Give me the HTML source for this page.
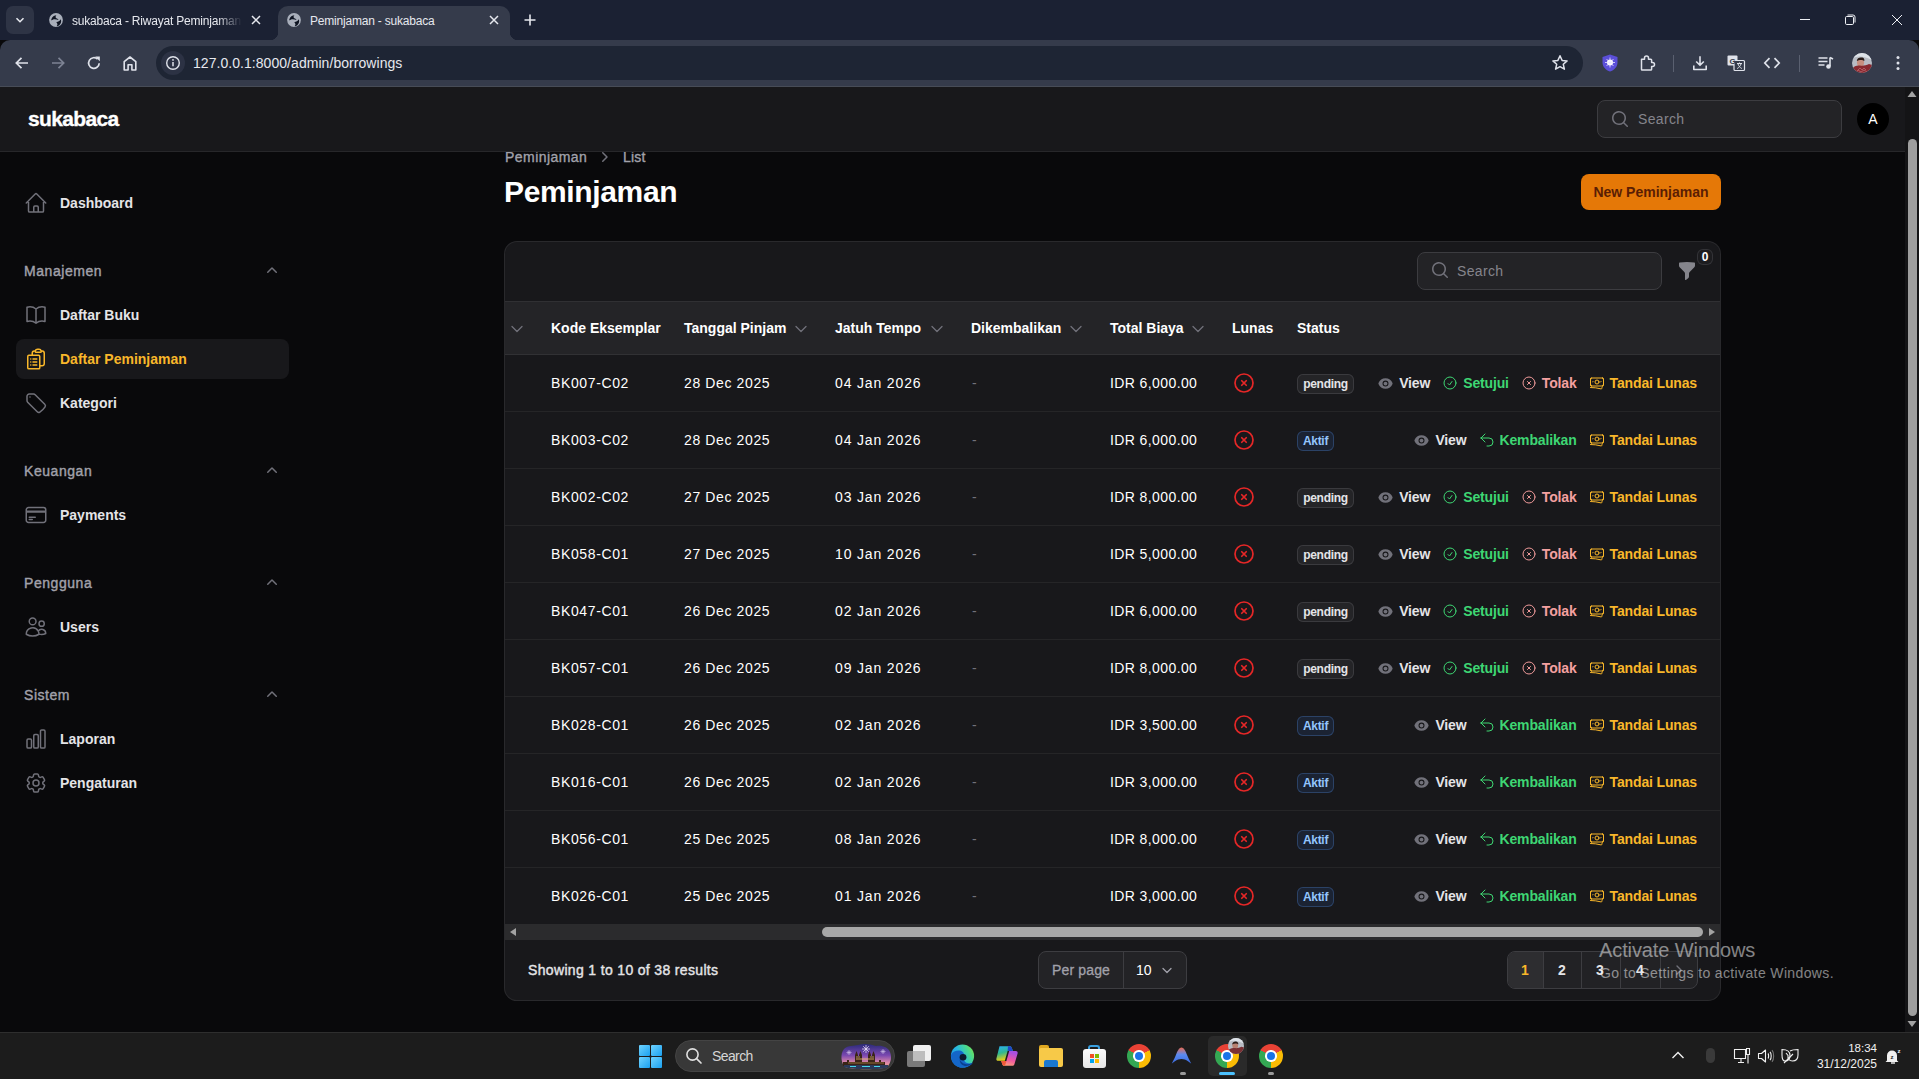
<!DOCTYPE html>
<html><head><meta charset="utf-8">
<style>
*{box-sizing:border-box;margin:0;padding:0}
html,body{width:1919px;height:1079px;overflow:hidden;background:#09090b;font-family:"Liberation Sans",sans-serif;}
.a{position:absolute}
svg{display:block}
/* chrome */
#tabstrip{left:0;top:0;width:1919px;height:40px;background:#1b2133}
#toolbar{left:0;top:40px;width:1919px;height:47px;background:#353b4b;border-radius:10px 10px 0 0}
.tabtxt{font-size:12px;color:#e6e8ee;white-space:nowrap;line-height:16px;letter-spacing:-.2px}
#omni{left:156px;top:46px;width:1427px;height:34px;border-radius:17px;background:#1e2534}
/* app */
#topbar{left:0;top:87px;width:1905px;height:65px;background:#18181b;border-bottom:1px solid #27272a}
.nav{left:16px;width:273px;height:40px;border-radius:8px}
.navtxt{position:absolute;left:44px;top:0;line-height:40px;font-size:14px;font-weight:700;color:#e4e4e7;white-space:nowrap}
.navic{position:absolute;left:8px;top:8px;width:24px;height:24px}
.grp{left:24px;font-size:14px;font-weight:400;letter-spacing:.55px;-webkit-text-stroke:.4px #a1a1aa;color:#a1a1aa;line-height:20px;white-space:nowrap}
.grpch{left:262px;width:20px;height:20px}
.th{font-size:14px;font-weight:700;color:#fff;line-height:20px;white-space:nowrap}
.td{font-size:14px;color:#fff;line-height:20px;white-space:nowrap;letter-spacing:.62px}
.badge{height:20px;border-radius:6px;background:#242427;box-shadow:inset 0 0 0 1px #3a3a3e;color:#e4e4e7;font-size:12px;font-weight:700;line-height:20px;text-align:center;letter-spacing:-.3px}
.badge.info{background:#1b2333;box-shadow:inset 0 0 0 1px #2b4266;color:#93c5fd}
.acts{display:flex;gap:12px;height:20px;align-items:center;white-space:nowrap}
.act{display:flex;align-items:center;gap:5px;font-size:14px;font-weight:700;line-height:20px;letter-spacing:-.15px}
</style></head>
<body>
<!-- ============ CHROME TAB STRIP ============ -->
<div id="tabstrip" class="a"></div>
<div class="a" style="left:6px;top:6px;width:28px;height:28px;border-radius:7px;background:#2e3445"></div>
<svg class="a" style="left:14px;top:14px" width="12" height="12" viewBox="0 0 12 12"><path d="M2.5 4.2 6 7.7 9.5 4.2" fill="none" stroke="#e6e8ee" stroke-width="1.6"/></svg>
<!-- tab 1 -->
<svg class="a" style="left:49px;top:13px" width="14" height="14" viewBox="0 0 14 14"><circle cx="7" cy="7" r="6.9" fill="#a9afbb"/><path d="M2.3 7.6C2.2 4.8 4.4 2.4 7.4 2.2c-.9.9-1.1 2-.3 2.8.8.7 2 .9 2.4 2-1.4-.2-2.5-.7-3.9-.7-1.3 0-2.4.6-3.3 1.3z" fill="#0e1422"/><path d="M11.7 6.2c.5 1 .6 2.3.2 3.5-.6 1.9-2.3 3.3-4.3 3.5.7-.7 1.1-1.8.6-2.7-.3-.6-.8-.9-.8-1.5 1.6.1 3.3-.9 4.3-2.8z" fill="#0e1422"/></svg>
<div class="a tabtxt" style="left:72px;top:13px;width:170px;overflow:hidden;-webkit-mask-image:linear-gradient(90deg,#000 145px,transparent 170px)">sukabaca - Riwayat Peminjaman</div>
<svg class="a" style="left:250px;top:14px" width="12" height="12" viewBox="0 0 12 12"><path d="M2 2 10 10M10 2 2 10" stroke="#e6e8ee" stroke-width="1.5"/></svg>
<!-- active tab -->
<div class="a" style="left:278px;top:6px;width:232px;height:40px;background:#353b4b;border-radius:10px 10px 0 0"></div>
<div class="a" style="left:270px;top:32px;width:8px;height:8px;background:radial-gradient(circle at 0 0,#1b2133 8px,#353b4b 8.5px)"></div>
<div class="a" style="left:510px;top:32px;width:8px;height:8px;background:radial-gradient(circle at 100% 0,#1b2133 8px,#353b4b 8.5px)"></div>
<svg class="a" style="left:287px;top:13px" width="14" height="14" viewBox="0 0 14 14"><circle cx="7" cy="7" r="6.9" fill="#a9afbb"/><path d="M2.3 7.6C2.2 4.8 4.4 2.4 7.4 2.2c-.9.9-1.1 2-.3 2.8.8.7 2 .9 2.4 2-1.4-.2-2.5-.7-3.9-.7-1.3 0-2.4.6-3.3 1.3z" fill="#0e1422"/><path d="M11.7 6.2c.5 1 .6 2.3.2 3.5-.6 1.9-2.3 3.3-4.3 3.5.7-.7 1.1-1.8.6-2.7-.3-.6-.8-.9-.8-1.5 1.6.1 3.3-.9 4.3-2.8z" fill="#0e1422"/></svg>
<div class="a tabtxt" style="left:310px;top:13px">Peminjaman - sukabaca</div>
<svg class="a" style="left:488px;top:14px" width="12" height="12" viewBox="0 0 12 12"><path d="M2 2 10 10M10 2 2 10" stroke="#e6e8ee" stroke-width="1.5"/></svg>
<svg class="a" style="left:523px;top:13px" width="14" height="14" viewBox="0 0 14 14"><path d="M7 1.5v11M1.5 7h11" stroke="#e6e8ee" stroke-width="1.6"/></svg>
<!-- window controls -->
<svg class="a" style="left:1799px;top:13px" width="14" height="14" viewBox="0 0 14 14"><path d="M1 6.5h10" stroke="#eef0f5" stroke-width="1"/></svg>
<svg class="a" style="left:1844px;top:13px" width="14" height="14" viewBox="0 0 14 14"><rect x="1.5" y="3.5" width="8" height="8" rx="1.2" fill="none" stroke="#eef0f5" stroke-width="1"/><path d="M3.5 2h5.5a2 2 0 0 1 2 2v5.5" fill="none" stroke="#eef0f5" stroke-width="1"/></svg>
<svg class="a" style="left:1890px;top:13px" width="14" height="14" viewBox="0 0 14 14"><path d="M2 2 12 12M12 2 2 12" stroke="#eef0f5" stroke-width="1"/></svg>

<!-- ============ CHROME TOOLBAR ============ -->
<div id="toolbar" class="a"></div>
<!-- nav buttons -->
<svg class="a" style="left:13px;top:54px" width="18" height="18" viewBox="0 0 18 18"><path d="M15 9H3.5M8.5 3.8 3.3 9l5.2 5.2" fill="none" stroke="#dfe2ea" stroke-width="1.7"/></svg>
<svg class="a" style="left:49px;top:54px" width="18" height="18" viewBox="0 0 18 18"><path d="M3 9h11.5M9.5 3.8 14.7 9l-5.2 5.2" fill="none" stroke="#7d8394" stroke-width="1.7"/></svg>
<svg class="a" style="left:85px;top:54px" width="18" height="18" viewBox="0 0 18 18"><path d="M14.2 9.2A5.3 5.3 0 1 1 12.6 5.2" fill="none" stroke="#dfe2ea" stroke-width="1.7"/><path d="M10.2 2.6h4.6v4.6z" fill="#dfe2ea"/></svg>
<svg class="a" style="left:121px;top:54px" width="18" height="18" viewBox="0 0 18 18"><path d="M3.2 16V7.6L9 3l5.8 4.6V16h-3.9v-5.2H7.1V16z" fill="none" stroke="#dfe2ea" stroke-width="1.6" stroke-linejoin="round"/></svg>
<div class="a" style="left:0;top:86px;width:1919px;height:1px;background:#474c57"></div>
<div id="omni" class="a"></div>
<div class="a" style="left:161px;top:51px;width:24px;height:24px;border-radius:12px;background:#2c3244"></div>
<svg class="a" style="left:165px;top:55px" width="16" height="16" viewBox="0 0 16 16"><circle cx="8" cy="8" r="6.3" fill="none" stroke="#dfe2ea" stroke-width="1.4"/><path d="M8 7v4.3" stroke="#dfe2ea" stroke-width="1.5"/><circle cx="8" cy="4.9" r=".9" fill="#dfe2ea"/></svg>
<div class="a" style="left:193px;top:55px;font-size:14px;line-height:16px;color:#e6e8ee;letter-spacing:.05px">127.0.0.1:8000/admin/borrowings</div>
<svg class="a" style="left:1551px;top:54px" width="18" height="18" viewBox="0 0 18 18"><path d="M9 1.8l2.1 4.6 5 .5-3.8 3.4 1.1 4.9L9 12.7l-4.4 2.5 1.1-4.9L1.9 6.9l5-.5z" fill="none" stroke="#dfe2ea" stroke-width="1.5" stroke-linejoin="round"/></svg>
<!-- extension icons -->
<svg class="a" style="left:1600px;top:53px" width="20" height="20" viewBox="0 0 20 20"><path d="M10 1.5 17.5 4v5.5c0 4.3-3.3 7.7-7.5 9-4.2-1.3-7.5-4.7-7.5-9V4z" fill="#5b4fd8"/><circle cx="10" cy="9.5" r="3" fill="#fff"/><path d="M10 4.5v10M5 9.5h10M6.5 6l7 7M13.5 6l-7 7" stroke="#e9e5ff" stroke-width=".8"/></svg>
<svg class="a" style="left:1638px;top:54px" width="18" height="18" viewBox="0 0 18 18"><path d="M3.5 5.2h3V4a2 2 0 0 1 4 0v1.2h2.3a.8.8 0 0 1 .8.8v2.6h.9a2 2 0 0 1 0 4h-.9v2.7a.8.8 0 0 1-.8.8H4.3a.8.8 0 0 1-.8-.8z" fill="none" stroke="#dfe2ea" stroke-width="1.5" stroke-linejoin="round"/></svg>
<div class="a" style="left:1673px;top:55px;width:1px;height:17px;background:#5a6070"></div>
<svg class="a" style="left:1691px;top:54px" width="18" height="18" viewBox="0 0 18 18"><path d="M9 2.2v9M5.2 7.5 9 11.3l3.8-3.8M2.8 11.5v4h12.4v-4" fill="none" stroke="#dfe2ea" stroke-width="1.6" stroke-linejoin="round"/></svg>
<svg class="a" style="left:1726px;top:53px" width="20" height="20" viewBox="0 0 20 20"><rect x="1.5" y="2.5" width="10" height="10" rx="1" fill="#dfe2ea"/><rect x="8" y="7.5" width="10.5" height="10" rx="1" fill="#353b4b" stroke="#dfe2ea" stroke-width="1.2"/><text x="6.5" y="10.5" font-size="8" font-weight="700" fill="#353b4b" text-anchor="middle" font-family="Liberation Sans">G</text><path d="M11 10.5h5M13.5 9.5v1M12 11c.6 2 2 3.5 3.8 4.5M15 11c-.6 2-2 3.5-3.8 4.5" stroke="#dfe2ea" stroke-width="1" fill="none"/></svg>
<svg class="a" style="left:1763px;top:54px" width="18" height="18" viewBox="0 0 18 18"><path d="M6.5 4.2 1.8 9l4.7 4.8M11.5 4.2 16.2 9l-4.7 4.8" fill="none" stroke="#dfe2ea" stroke-width="1.7"/></svg>
<div class="a" style="left:1799px;top:55px;width:1px;height:17px;background:#5a6070"></div>
<svg class="a" style="left:1817px;top:54px" width="18" height="18" viewBox="0 0 18 18"><path d="M1.5 4h9M1.5 7.5h9M1.5 11h6" stroke="#dfe2ea" stroke-width="1.6"/><path d="M13 3.5v8.5" stroke="#dfe2ea" stroke-width="1.6"/><circle cx="11.5" cy="12.5" r="2.3" fill="#dfe2ea"/><path d="M13 3.5l3 1.5" stroke="#dfe2ea" stroke-width="1.6"/></svg>
<svg class="a" style="left:1852px;top:53px" width="20" height="20" viewBox="0 0 20 20"><defs><clipPath id="avc"><circle cx="10" cy="10" r="10"/></clipPath></defs><g clip-path="url(#avc)"><rect width="20" height="20" fill="#b8bcc4"/><path d="M0 6C5 2 12 3 20 7V0H0z" fill="#dde2e8"/><ellipse cx="8.5" cy="9.5" rx="3.6" ry="4.6" fill="#c89080"/><path d="M4.8 8C5 4.5 8 4 10.5 4.6 12 5 12.6 6.5 12.3 8 11 6.5 7 6.5 4.8 8z" fill="#2a1c18"/><path d="M0 20v-4c2-3 5-4 8-3.5 3 .5 6 0 9-1.5l3 1V20z" fill="#8a2a30"/><path d="M6 17l2-2 2 2 2-2 2 2M4 19l2-2 3 2 3-2 3 2" stroke="#c07078" stroke-width=".7" fill="none"/></g></svg>
<svg class="a" style="left:1889px;top:54px" width="18" height="18" viewBox="0 0 18 18"><circle cx="9" cy="3.5" r="1.5" fill="#dfe2ea"/><circle cx="9" cy="9" r="1.5" fill="#dfe2ea"/><circle cx="9" cy="14.5" r="1.5" fill="#dfe2ea"/></svg>

<!-- ============ SIDEBAR ============ -->
<!-- SIDEBAR_START -->
<div class="a nav" style="top:183px;"><div class="navic"><svg width="24" height="24" viewBox="0 0 24 24" fill="none" stroke="#71717a" stroke-width="1.5" stroke-linecap="round" stroke-linejoin="round" ><path d="m2.25 12 8.954-8.955c.44-.439 1.152-.439 1.591 0L21.75 12M4.5 9.75v10.125c0 .621.504 1.125 1.125 1.125H9.75v-4.875c0-.621.504-1.125 1.125-1.125h2.25c.621 0 1.125.504 1.125 1.125V21h4.125c.621 0 1.125-.504 1.125-1.125V9.75M8.25 21h8.25"/></svg></div><div class="navtxt" style="color:#e4e4e7">Dashboard</div></div>
<div class="a grp" style="top:261px">Manajemen</div>
<svg class="a grpch" style="top:261px" viewBox="0 0 20 20"><path fill="#71717a" fill-rule="evenodd" d="M9.47 6.47a.75.75 0 0 1 1.06 0l4.25 4.25a.75.75 0 1 1-1.06 1.06L10 8.06l-3.72 3.72a.75.75 0 0 1-1.06-1.06l4.25-4.25Z"/></svg>
<div class="a nav" style="top:295px;"><div class="navic"><svg width="24" height="24" viewBox="0 0 24 24" fill="none" stroke="#71717a" stroke-width="1.5" stroke-linecap="round" stroke-linejoin="round" ><path d="M12 6.042A8.967 8.967 0 0 0 6 3.75c-1.052 0-2.062.18-3 .512v14.25A8.987 8.987 0 0 1 6 18c2.305 0 4.408.867 6 2.292m0-14.25a8.966 8.966 0 0 1 6-2.292c1.052 0 2.062.18 3 .512v14.25A8.987 8.987 0 0 0 18 18a8.967 8.967 0 0 0-6 2.292m0-14.25v14.25"/></svg></div><div class="navtxt" style="color:#e4e4e7">Daftar Buku</div></div>
<div class="a nav" style="top:339px;background:#18181b;"><div class="navic"><svg width="24" height="24" viewBox="0 0 24 24" fill="none" stroke="#f9b72a" stroke-width="1.5" stroke-linecap="round" stroke-linejoin="round" ><path d="M9 12h3.75M9 15h3.75M9 18h3.75m3 .75H18a2.25 2.25 0 0 0 2.25-2.25V6.108c0-1.135-.845-2.098-1.976-2.192a48.424 48.424 0 0 0-1.123-.08m-5.801 0c-.065.21-.1.433-.1.664 0 .414.336.75.75.75h4.5a.75.75 0 0 0 .75-.75 2.25 2.25 0 0 0-.1-.664m-5.8 0A2.251 2.251 0 0 1 13.5 2.25H15c1.012 0 1.867.668 2.15 1.586m-5.8 0c-.376.023-.75.05-1.124.08C9.095 4.01 8.25 4.973 8.25 6.108V8.25m0 0H4.875c-.621 0-1.125.504-1.125 1.125v11.25c0 .621.504 1.125 1.125 1.125h9.75c.621 0 1.125-.504 1.125-1.125V9.375c0-.621-.504-1.125-1.125-1.125H8.25ZM6.75 12h.008v.008H6.75V12Zm0 3h.008v.008H6.75V15Zm0 3h.008v.008H6.75V18Z"/></svg></div><div class="navtxt" style="color:#f9b72a">Daftar Peminjaman</div></div>
<div class="a nav" style="top:383px;"><div class="navic"><svg width="24" height="24" viewBox="0 0 24 24" fill="none" stroke="#71717a" stroke-width="1.5" stroke-linecap="round" stroke-linejoin="round" ><path d="M9.568 3H5.25A2.25 2.25 0 0 0 3 5.25v4.318c0 .597.237 1.17.659 1.591l9.581 9.581c.699.699 1.78.872 2.607.33a18.095 18.095 0 0 0 5.223-5.223c.542-.827.369-1.908-.33-2.607L11.16 3.66A2.25 2.25 0 0 0 9.568 3ZM6 6h.008v.008H6V6Z"/></svg></div><div class="navtxt" style="color:#e4e4e7">Kategori</div></div>
<div class="a grp" style="top:461px">Keuangan</div>
<svg class="a grpch" style="top:461px" viewBox="0 0 20 20"><path fill="#71717a" fill-rule="evenodd" d="M9.47 6.47a.75.75 0 0 1 1.06 0l4.25 4.25a.75.75 0 1 1-1.06 1.06L10 8.06l-3.72 3.72a.75.75 0 0 1-1.06-1.06l4.25-4.25Z"/></svg>
<div class="a nav" style="top:495px;"><div class="navic"><svg width="24" height="24" viewBox="0 0 24 24" fill="none" stroke="#71717a" stroke-width="1.5" stroke-linecap="round" stroke-linejoin="round" ><path d="M2.25 8.25h19.5M2.25 9h19.5m-16.5 5.25h6m-6 2.25h3m-3.75 3h15a2.25 2.25 0 0 0 2.25-2.25V6.75A2.25 2.25 0 0 0 19.5 4.5h-15a2.25 2.25 0 0 0-2.25 2.25v10.5A2.25 2.25 0 0 0 4.5 19.5Z"/></svg></div><div class="navtxt" style="color:#e4e4e7">Payments</div></div>
<div class="a grp" style="top:573px">Pengguna</div>
<svg class="a grpch" style="top:573px" viewBox="0 0 20 20"><path fill="#71717a" fill-rule="evenodd" d="M9.47 6.47a.75.75 0 0 1 1.06 0l4.25 4.25a.75.75 0 1 1-1.06 1.06L10 8.06l-3.72 3.72a.75.75 0 0 1-1.06-1.06l4.25-4.25Z"/></svg>
<div class="a nav" style="top:607px;"><div class="navic"><svg width="24" height="24" viewBox="0 0 24 24" fill="none" stroke="#71717a" stroke-width="1.5" stroke-linecap="round" stroke-linejoin="round" ><path d="M15 19.128a9.38 9.38 0 0 0 2.625.372 9.337 9.337 0 0 0 4.121-.952 4.125 4.125 0 0 0-7.533-2.493M15 19.128v-.003c0-1.113-.285-2.16-.786-3.07M15 19.128v.106A12.318 12.318 0 0 1 8.624 21c-2.331 0-4.512-.645-6.374-1.766l-.001-.109a6.375 6.375 0 0 1 11.964-3.07M12 6.375a3.375 3.375 0 1 1-6.75 0 3.375 3.375 0 0 1 6.75 0Zm8.25 2.25a2.625 2.625 0 1 1-5.25 0 2.625 2.625 0 0 1 5.25 0Z"/></svg></div><div class="navtxt" style="color:#e4e4e7">Users</div></div>
<div class="a grp" style="top:685px">Sistem</div>
<svg class="a grpch" style="top:685px" viewBox="0 0 20 20"><path fill="#71717a" fill-rule="evenodd" d="M9.47 6.47a.75.75 0 0 1 1.06 0l4.25 4.25a.75.75 0 1 1-1.06 1.06L10 8.06l-3.72 3.72a.75.75 0 0 1-1.06-1.06l4.25-4.25Z"/></svg>
<div class="a nav" style="top:719px;"><div class="navic"><svg width="24" height="24" viewBox="0 0 24 24" fill="none" stroke="#71717a" stroke-width="1.5" stroke-linecap="round" stroke-linejoin="round" ><path d="M3 13.125C3 12.504 3.504 12 4.125 12h2.25c.621 0 1.125.504 1.125 1.125v6.75C7.5 20.496 6.996 21 6.375 21h-2.25A1.125 1.125 0 0 1 3 19.875v-6.75ZM9.75 8.625c0-.621.504-1.125 1.125-1.125h2.25c.621 0 1.125.504 1.125 1.125v11.25c0 .621-.504 1.125-1.125 1.125h-2.25a1.125 1.125 0 0 1-1.125-1.125V8.625ZM16.5 4.125c0-.621.504-1.125 1.125-1.125h2.25C20.496 3 21 3.504 21 4.125v15.75c0 .621-.504 1.125-1.125 1.125h-2.25a1.125 1.125 0 0 1-1.125-1.125V4.125Z"/></svg></div><div class="navtxt" style="color:#e4e4e7">Laporan</div></div>
<div class="a nav" style="top:763px;"><div class="navic"><svg width="24" height="24" viewBox="0 0 24 24" fill="none" stroke="#71717a" stroke-width="1.5" stroke-linecap="round" stroke-linejoin="round" ><path d="M9.594 3.94c.09-.542.56-.94 1.11-.94h2.593c.55 0 1.02.398 1.11.94l.213 1.281c.063.374.313.686.645.87.074.04.147.083.22.127.325.196.72.257 1.075.124l1.217-.456a1.125 1.125 0 0 1 1.37.49l1.296 2.247a1.125 1.125 0 0 1-.26 1.431l-1.003.827c-.293.241-.438.613-.43.992a7.723 7.723 0 0 1 0 .255c-.008.378.137.75.43.991l1.004.827c.424.35.534.955.26 1.43l-1.298 2.247a1.125 1.125 0 0 1-1.369.491l-1.217-.456c-.355-.133-.75-.072-1.076.124a6.47 6.47 0 0 1-.22.128c-.331.183-.581.495-.644.869l-.213 1.281c-.09.543-.56.94-1.11.94h-2.594c-.55 0-1.019-.398-1.11-.94l-.213-1.281c-.062-.374-.312-.686-.644-.87a6.52 6.52 0 0 1-.22-.127c-.325-.196-.72-.257-1.076-.124l-1.217.456a1.125 1.125 0 0 1-1.369-.49l-1.297-2.247a1.125 1.125 0 0 1 .26-1.431l1.004-.827c.292-.24.437-.613.43-.991a6.932 6.932 0 0 1 0-.255c.007-.38-.138-.751-.43-.992l-1.004-.827a1.125 1.125 0 0 1-.26-1.43l1.297-2.247a1.125 1.125 0 0 1 1.37-.491l1.216.456c.356.133.751.072 1.076-.124.072-.044.146-.086.22-.128.332-.183.582-.495.644-.869l.214-1.28ZM15 12a3 3 0 1 1-6 0 3 3 0 0 1 6 0Z"/></svg></div><div class="navtxt" style="color:#e4e4e7">Pengaturan</div></div>
<!-- SIDEBAR_END -->
<!-- ============ MAIN ============ -->
<!-- MAIN_START -->
<div class="a" style="left:505px;top:147.5px;font-size:14px;line-height:18px;color:#a1a1aa;letter-spacing:.45px;-webkit-text-stroke:.35px #a1a1aa">Peminjaman</div>
<svg class="a" style="left:594px;top:147px" width="20" height="20" viewBox="0 0 20 20"><path fill="#71717a" fill-rule="evenodd" d="M8.22 5.22a.75.75 0 0 1 1.06 0l4.25 4.25a.75.75 0 0 1 0 1.06l-4.25 4.25a.75.75 0 0 1-1.06-1.06L11.94 10 8.22 6.28a.75.75 0 0 1 0-1.06Z"/></svg>
<div class="a" style="left:623px;top:147.5px;font-size:14px;line-height:18px;color:#a1a1aa;letter-spacing:.2px;-webkit-text-stroke:.35px #a1a1aa">List</div>
<div class="a" style="left:504px;top:174px;font-size:30px;line-height:36px;font-weight:700;color:#fff;letter-spacing:-.35px">Peminjaman</div>
<div class="a" style="left:1581px;top:174px;width:140px;height:36px;border-radius:8px;background:#e57807;color:#5a1e04;font-size:14px;font-weight:700;line-height:36px;text-align:center">New Peminjaman</div>
<div class="a" style="left:505px;top:242px;width:1215px;height:758px;border-radius:12px;background:#18181b;box-shadow:0 0 0 1px #29292c"></div>
<div class="a" style="left:505px;top:301px;width:1215px;height:1px;background:#303033"></div>
<div class="a" style="left:1417px;top:252px;width:245px;height:38px;border-radius:8px;background:#232326;border:1px solid #3c3c40"></div>
<svg class="a" style="left:1430px;top:260px" width="20" height="20" viewBox="0 0 20 20"><path fill="#71717a" fill-rule="evenodd" d="M9 3.5a5.5 5.5 0 1 0 0 11 5.5 5.5 0 0 0 0-11ZM2 9a7 7 0 1 1 12.452 4.391l3.328 3.329a.75.75 0 1 1-1.06 1.06l-3.329-3.328A7 7 0 0 1 2 9Z"/></svg>
<div class="a" style="left:1457px;top:262px;font-size:14px;line-height:18px;color:#85858c;letter-spacing:.35px">Search</div>
<svg class="a" style="left:1677px;top:261px" width="20" height="20" viewBox="0 0 20 20"><path fill="#85858c" d="M2.628 1.601C5.028 1.206 7.49 1 10 1s4.973.206 7.372.601a.75.75 0 0 1 .628.74v2.288a2.25 2.25 0 0 1-.659 1.59l-4.682 4.683a2.25 2.25 0 0 0-.659 1.59v3.037c0 .684-.31 1.33-.844 1.757l-1.937 1.55A.75.75 0 0 1 8 18.25v-5.757a2.25 2.25 0 0 0-.659-1.591L2.659 6.22A2.25 2.25 0 0 1 2 4.629V2.34a.75.75 0 0 1 .628-.74Z"/></svg>
<div class="a" style="left:1698px;top:250px;width:14px;height:14px;border-radius:5px;background:#1c1c1f;box-shadow:0 0 0 1px #333337;color:#fff;font-size:12px;font-weight:700;line-height:14px;text-align:center">0</div>
<div class="a" style="left:505px;top:302px;width:1215px;height:52px;background:#242427"></div>
<div class="a" style="left:505px;top:354px;width:1215px;height:1px;background:#313134"></div>
<svg class="a" style="left:507px;top:318.5px" width="20" height="20" viewBox="0 0 20 20"><path d="m15 7.5-5 5-5-5" fill="none" stroke="#71717a" stroke-width="1.3" stroke-linecap="round" stroke-linejoin="round"/></svg>
<div class="a th" style="left:551px;top:318px">Kode Eksemplar</div>
<div class="a th" style="left:684px;top:318px">Tanggal Pinjam</div>
<svg class="a" style="left:791px;top:318.5px" width="20" height="20" viewBox="0 0 20 20"><path d="m15 7.5-5 5-5-5" fill="none" stroke="#71717a" stroke-width="1.3" stroke-linecap="round" stroke-linejoin="round"/></svg>
<div class="a th" style="left:835px;top:318px">Jatuh Tempo</div>
<svg class="a" style="left:927px;top:318.5px" width="20" height="20" viewBox="0 0 20 20"><path d="m15 7.5-5 5-5-5" fill="none" stroke="#71717a" stroke-width="1.3" stroke-linecap="round" stroke-linejoin="round"/></svg>
<div class="a th" style="left:971px;top:318px">Dikembalikan</div>
<svg class="a" style="left:1066px;top:318.5px" width="20" height="20" viewBox="0 0 20 20"><path d="m15 7.5-5 5-5-5" fill="none" stroke="#71717a" stroke-width="1.3" stroke-linecap="round" stroke-linejoin="round"/></svg>
<div class="a th" style="left:1110px;top:318px">Total Biaya</div>
<svg class="a" style="left:1188px;top:318.5px" width="20" height="20" viewBox="0 0 20 20"><path d="m15 7.5-5 5-5-5" fill="none" stroke="#71717a" stroke-width="1.3" stroke-linecap="round" stroke-linejoin="round"/></svg>
<div class="a th" style="left:1232px;top:318px">Lunas</div>
<div class="a th" style="left:1297px;top:318px">Status</div>
<div class="a td" style="left:551px;top:373px">BK007-C02</div>
<div class="a td" style="left:684px;top:373px">28 Dec 2025</div>
<div class="a td" style="left:835px;top:373px;letter-spacing:.85px">04 Jan 2026</div>
<div class="a td" style="left:972px;top:373px;color:#71717a">-</div>
<div class="a td" style="left:1110px;top:373px;letter-spacing:.4px">IDR 6,000.00</div>
<svg class="a" style="left:1232px;top:371px" width="24" height="24" viewBox="0 0 24 24" fill="none" stroke="#e52727" stroke-width="1.7" stroke-linecap="round"><path d="m9.75 9.75 4.5 4.5m0-4.5-4.5 4.5M21 12a9 9 0 1 1-18 0 9 9 0 0 1 18 0Z"/></svg>
<div class="a badge" style="left:1297px;top:374px;width:57px">pending</div>
<div class="a acts" style="right:222px;top:373px"><span class="act"><svg width="15" height="15" viewBox="0 0 20 20" style="margin-right:1px"><path fill="#71717a" d="M10 12.5a2.5 2.5 0 1 0 0-5 2.5 2.5 0 0 0 0 5Z"/><path fill="#71717a" fill-rule="evenodd" d="M.664 10.59a1.651 1.651 0 0 1 0-1.186A10.004 10.004 0 0 1 10 3c4.257 0 7.893 2.66 9.336 6.41.147.381.146.804 0 1.186A10.004 10.004 0 0 1 10 17c-4.257 0-7.893-2.66-9.336-6.41ZM14 10a4 4 0 1 1-8 0 4 4 0 0 1 8 0Z"/></svg><span style="color:#e4e4e7">View</span></span><span class="act"><svg width="16" height="16" viewBox="0 0 24 24" fill="none" stroke="#3ed673" stroke-width="1.5" stroke-linecap="round" stroke-linejoin="round"><path d="M9 12.75 11.25 15 15 9.75M21 12a9 9 0 1 1-18 0 9 9 0 0 1 18 0Z"/></svg><span style="color:#3ed673">Setujui</span></span><span class="act"><svg width="16" height="16" viewBox="0 0 24 24" fill="none" stroke="#f09a9a" stroke-width="1.5" stroke-linecap="round" stroke-linejoin="round"><path d="m9.75 9.75 4.5 4.5m0-4.5-4.5 4.5M21 12a9 9 0 1 1-18 0 9 9 0 0 1 18 0Z"/></svg><span style="color:#f4a0a0">Tolak</span></span><span class="act"><svg width="16" height="16" viewBox="0 0 24 24" fill="none" stroke="#f9b72a" stroke-width="1.5" stroke-linecap="round" stroke-linejoin="round"><path d="M2.25 18.75a60.07 60.07 0 0 1 15.797 2.101c.727.198 1.453-.342 1.453-1.096V18.75M3.75 4.5v.75A.75.75 0 0 1 3 6h-.75m0 0v-.375c0-.621.504-1.125 1.125-1.125H20.25M2.25 6v9m18-10.5v.75c0 .414.336.75.75.75h.75m-1.5-1.5h.375c.621 0 1.125.504 1.125 1.125v9.75c0 .621-.504 1.125-1.125 1.125h-.375m1.5-1.5H21a.75.75 0 0 0-.75.75v.75m0 0H3.75m0 0h-.375a1.125 1.125 0 0 1-1.125-1.125V15m1.5 1.5v-.75A.75.75 0 0 0 3 15h-.75M15 10.5a3 3 0 1 1-6 0 3 3 0 0 1 6 0Zm3 0h.008v.008H18V10.5Zm-12 0h.008v.008H6V10.5Z"/></svg><span style="color:#f9b72a">Tandai Lunas</span></span></div>
<div class="a" style="left:505px;top:411px;width:1215px;height:1px;background:#252527"></div>
<div class="a td" style="left:551px;top:430px">BK003-C02</div>
<div class="a td" style="left:684px;top:430px">28 Dec 2025</div>
<div class="a td" style="left:835px;top:430px;letter-spacing:.85px">04 Jan 2026</div>
<div class="a td" style="left:972px;top:430px;color:#71717a">-</div>
<div class="a td" style="left:1110px;top:430px;letter-spacing:.4px">IDR 6,000.00</div>
<svg class="a" style="left:1232px;top:428px" width="24" height="24" viewBox="0 0 24 24" fill="none" stroke="#e52727" stroke-width="1.7" stroke-linecap="round"><path d="m9.75 9.75 4.5 4.5m0-4.5-4.5 4.5M21 12a9 9 0 1 1-18 0 9 9 0 0 1 18 0Z"/></svg>
<div class="a badge info" style="left:1297px;top:431px;width:37px">Aktif</div>
<div class="a acts" style="right:222px;top:430px"><span class="act"><svg width="15" height="15" viewBox="0 0 20 20" style="margin-right:1px"><path fill="#71717a" d="M10 12.5a2.5 2.5 0 1 0 0-5 2.5 2.5 0 0 0 0 5Z"/><path fill="#71717a" fill-rule="evenodd" d="M.664 10.59a1.651 1.651 0 0 1 0-1.186A10.004 10.004 0 0 1 10 3c4.257 0 7.893 2.66 9.336 6.41.147.381.146.804 0 1.186A10.004 10.004 0 0 1 10 17c-4.257 0-7.893-2.66-9.336-6.41ZM14 10a4 4 0 1 1-8 0 4 4 0 0 1 8 0Z"/></svg><span style="color:#e4e4e7">View</span></span><span class="act"><svg width="16" height="16" viewBox="0 0 24 24" fill="none" stroke="#3ed673" stroke-width="1.5" stroke-linecap="round" stroke-linejoin="round"><path d="M9 15 3 9m0 0 6-6M3 9h12a6 6 0 0 1 0 12h-3"/></svg><span style="color:#3ed673">Kembalikan</span></span><span class="act"><svg width="16" height="16" viewBox="0 0 24 24" fill="none" stroke="#f9b72a" stroke-width="1.5" stroke-linecap="round" stroke-linejoin="round"><path d="M2.25 18.75a60.07 60.07 0 0 1 15.797 2.101c.727.198 1.453-.342 1.453-1.096V18.75M3.75 4.5v.75A.75.75 0 0 1 3 6h-.75m0 0v-.375c0-.621.504-1.125 1.125-1.125H20.25M2.25 6v9m18-10.5v.75c0 .414.336.75.75.75h.75m-1.5-1.5h.375c.621 0 1.125.504 1.125 1.125v9.75c0 .621-.504 1.125-1.125 1.125h-.375m1.5-1.5H21a.75.75 0 0 0-.75.75v.75m0 0H3.75m0 0h-.375a1.125 1.125 0 0 1-1.125-1.125V15m1.5 1.5v-.75A.75.75 0 0 0 3 15h-.75M15 10.5a3 3 0 1 1-6 0 3 3 0 0 1 6 0Zm3 0h.008v.008H18V10.5Zm-12 0h.008v.008H6V10.5Z"/></svg><span style="color:#f9b72a">Tandai Lunas</span></span></div>
<div class="a" style="left:505px;top:468px;width:1215px;height:1px;background:#252527"></div>
<div class="a td" style="left:551px;top:487px">BK002-C02</div>
<div class="a td" style="left:684px;top:487px">27 Dec 2025</div>
<div class="a td" style="left:835px;top:487px;letter-spacing:.85px">03 Jan 2026</div>
<div class="a td" style="left:972px;top:487px;color:#71717a">-</div>
<div class="a td" style="left:1110px;top:487px;letter-spacing:.4px">IDR 8,000.00</div>
<svg class="a" style="left:1232px;top:485px" width="24" height="24" viewBox="0 0 24 24" fill="none" stroke="#e52727" stroke-width="1.7" stroke-linecap="round"><path d="m9.75 9.75 4.5 4.5m0-4.5-4.5 4.5M21 12a9 9 0 1 1-18 0 9 9 0 0 1 18 0Z"/></svg>
<div class="a badge" style="left:1297px;top:488px;width:57px">pending</div>
<div class="a acts" style="right:222px;top:487px"><span class="act"><svg width="15" height="15" viewBox="0 0 20 20" style="margin-right:1px"><path fill="#71717a" d="M10 12.5a2.5 2.5 0 1 0 0-5 2.5 2.5 0 0 0 0 5Z"/><path fill="#71717a" fill-rule="evenodd" d="M.664 10.59a1.651 1.651 0 0 1 0-1.186A10.004 10.004 0 0 1 10 3c4.257 0 7.893 2.66 9.336 6.41.147.381.146.804 0 1.186A10.004 10.004 0 0 1 10 17c-4.257 0-7.893-2.66-9.336-6.41ZM14 10a4 4 0 1 1-8 0 4 4 0 0 1 8 0Z"/></svg><span style="color:#e4e4e7">View</span></span><span class="act"><svg width="16" height="16" viewBox="0 0 24 24" fill="none" stroke="#3ed673" stroke-width="1.5" stroke-linecap="round" stroke-linejoin="round"><path d="M9 12.75 11.25 15 15 9.75M21 12a9 9 0 1 1-18 0 9 9 0 0 1 18 0Z"/></svg><span style="color:#3ed673">Setujui</span></span><span class="act"><svg width="16" height="16" viewBox="0 0 24 24" fill="none" stroke="#f09a9a" stroke-width="1.5" stroke-linecap="round" stroke-linejoin="round"><path d="m9.75 9.75 4.5 4.5m0-4.5-4.5 4.5M21 12a9 9 0 1 1-18 0 9 9 0 0 1 18 0Z"/></svg><span style="color:#f4a0a0">Tolak</span></span><span class="act"><svg width="16" height="16" viewBox="0 0 24 24" fill="none" stroke="#f9b72a" stroke-width="1.5" stroke-linecap="round" stroke-linejoin="round"><path d="M2.25 18.75a60.07 60.07 0 0 1 15.797 2.101c.727.198 1.453-.342 1.453-1.096V18.75M3.75 4.5v.75A.75.75 0 0 1 3 6h-.75m0 0v-.375c0-.621.504-1.125 1.125-1.125H20.25M2.25 6v9m18-10.5v.75c0 .414.336.75.75.75h.75m-1.5-1.5h.375c.621 0 1.125.504 1.125 1.125v9.75c0 .621-.504 1.125-1.125 1.125h-.375m1.5-1.5H21a.75.75 0 0 0-.75.75v.75m0 0H3.75m0 0h-.375a1.125 1.125 0 0 1-1.125-1.125V15m1.5 1.5v-.75A.75.75 0 0 0 3 15h-.75M15 10.5a3 3 0 1 1-6 0 3 3 0 0 1 6 0Zm3 0h.008v.008H18V10.5Zm-12 0h.008v.008H6V10.5Z"/></svg><span style="color:#f9b72a">Tandai Lunas</span></span></div>
<div class="a" style="left:505px;top:525px;width:1215px;height:1px;background:#252527"></div>
<div class="a td" style="left:551px;top:544px">BK058-C01</div>
<div class="a td" style="left:684px;top:544px">27 Dec 2025</div>
<div class="a td" style="left:835px;top:544px;letter-spacing:.85px">10 Jan 2026</div>
<div class="a td" style="left:972px;top:544px;color:#71717a">-</div>
<div class="a td" style="left:1110px;top:544px;letter-spacing:.4px">IDR 5,000.00</div>
<svg class="a" style="left:1232px;top:542px" width="24" height="24" viewBox="0 0 24 24" fill="none" stroke="#e52727" stroke-width="1.7" stroke-linecap="round"><path d="m9.75 9.75 4.5 4.5m0-4.5-4.5 4.5M21 12a9 9 0 1 1-18 0 9 9 0 0 1 18 0Z"/></svg>
<div class="a badge" style="left:1297px;top:545px;width:57px">pending</div>
<div class="a acts" style="right:222px;top:544px"><span class="act"><svg width="15" height="15" viewBox="0 0 20 20" style="margin-right:1px"><path fill="#71717a" d="M10 12.5a2.5 2.5 0 1 0 0-5 2.5 2.5 0 0 0 0 5Z"/><path fill="#71717a" fill-rule="evenodd" d="M.664 10.59a1.651 1.651 0 0 1 0-1.186A10.004 10.004 0 0 1 10 3c4.257 0 7.893 2.66 9.336 6.41.147.381.146.804 0 1.186A10.004 10.004 0 0 1 10 17c-4.257 0-7.893-2.66-9.336-6.41ZM14 10a4 4 0 1 1-8 0 4 4 0 0 1 8 0Z"/></svg><span style="color:#e4e4e7">View</span></span><span class="act"><svg width="16" height="16" viewBox="0 0 24 24" fill="none" stroke="#3ed673" stroke-width="1.5" stroke-linecap="round" stroke-linejoin="round"><path d="M9 12.75 11.25 15 15 9.75M21 12a9 9 0 1 1-18 0 9 9 0 0 1 18 0Z"/></svg><span style="color:#3ed673">Setujui</span></span><span class="act"><svg width="16" height="16" viewBox="0 0 24 24" fill="none" stroke="#f09a9a" stroke-width="1.5" stroke-linecap="round" stroke-linejoin="round"><path d="m9.75 9.75 4.5 4.5m0-4.5-4.5 4.5M21 12a9 9 0 1 1-18 0 9 9 0 0 1 18 0Z"/></svg><span style="color:#f4a0a0">Tolak</span></span><span class="act"><svg width="16" height="16" viewBox="0 0 24 24" fill="none" stroke="#f9b72a" stroke-width="1.5" stroke-linecap="round" stroke-linejoin="round"><path d="M2.25 18.75a60.07 60.07 0 0 1 15.797 2.101c.727.198 1.453-.342 1.453-1.096V18.75M3.75 4.5v.75A.75.75 0 0 1 3 6h-.75m0 0v-.375c0-.621.504-1.125 1.125-1.125H20.25M2.25 6v9m18-10.5v.75c0 .414.336.75.75.75h.75m-1.5-1.5h.375c.621 0 1.125.504 1.125 1.125v9.75c0 .621-.504 1.125-1.125 1.125h-.375m1.5-1.5H21a.75.75 0 0 0-.75.75v.75m0 0H3.75m0 0h-.375a1.125 1.125 0 0 1-1.125-1.125V15m1.5 1.5v-.75A.75.75 0 0 0 3 15h-.75M15 10.5a3 3 0 1 1-6 0 3 3 0 0 1 6 0Zm3 0h.008v.008H18V10.5Zm-12 0h.008v.008H6V10.5Z"/></svg><span style="color:#f9b72a">Tandai Lunas</span></span></div>
<div class="a" style="left:505px;top:582px;width:1215px;height:1px;background:#252527"></div>
<div class="a td" style="left:551px;top:601px">BK047-C01</div>
<div class="a td" style="left:684px;top:601px">26 Dec 2025</div>
<div class="a td" style="left:835px;top:601px;letter-spacing:.85px">02 Jan 2026</div>
<div class="a td" style="left:972px;top:601px;color:#71717a">-</div>
<div class="a td" style="left:1110px;top:601px;letter-spacing:.4px">IDR 6,000.00</div>
<svg class="a" style="left:1232px;top:599px" width="24" height="24" viewBox="0 0 24 24" fill="none" stroke="#e52727" stroke-width="1.7" stroke-linecap="round"><path d="m9.75 9.75 4.5 4.5m0-4.5-4.5 4.5M21 12a9 9 0 1 1-18 0 9 9 0 0 1 18 0Z"/></svg>
<div class="a badge" style="left:1297px;top:602px;width:57px">pending</div>
<div class="a acts" style="right:222px;top:601px"><span class="act"><svg width="15" height="15" viewBox="0 0 20 20" style="margin-right:1px"><path fill="#71717a" d="M10 12.5a2.5 2.5 0 1 0 0-5 2.5 2.5 0 0 0 0 5Z"/><path fill="#71717a" fill-rule="evenodd" d="M.664 10.59a1.651 1.651 0 0 1 0-1.186A10.004 10.004 0 0 1 10 3c4.257 0 7.893 2.66 9.336 6.41.147.381.146.804 0 1.186A10.004 10.004 0 0 1 10 17c-4.257 0-7.893-2.66-9.336-6.41ZM14 10a4 4 0 1 1-8 0 4 4 0 0 1 8 0Z"/></svg><span style="color:#e4e4e7">View</span></span><span class="act"><svg width="16" height="16" viewBox="0 0 24 24" fill="none" stroke="#3ed673" stroke-width="1.5" stroke-linecap="round" stroke-linejoin="round"><path d="M9 12.75 11.25 15 15 9.75M21 12a9 9 0 1 1-18 0 9 9 0 0 1 18 0Z"/></svg><span style="color:#3ed673">Setujui</span></span><span class="act"><svg width="16" height="16" viewBox="0 0 24 24" fill="none" stroke="#f09a9a" stroke-width="1.5" stroke-linecap="round" stroke-linejoin="round"><path d="m9.75 9.75 4.5 4.5m0-4.5-4.5 4.5M21 12a9 9 0 1 1-18 0 9 9 0 0 1 18 0Z"/></svg><span style="color:#f4a0a0">Tolak</span></span><span class="act"><svg width="16" height="16" viewBox="0 0 24 24" fill="none" stroke="#f9b72a" stroke-width="1.5" stroke-linecap="round" stroke-linejoin="round"><path d="M2.25 18.75a60.07 60.07 0 0 1 15.797 2.101c.727.198 1.453-.342 1.453-1.096V18.75M3.75 4.5v.75A.75.75 0 0 1 3 6h-.75m0 0v-.375c0-.621.504-1.125 1.125-1.125H20.25M2.25 6v9m18-10.5v.75c0 .414.336.75.75.75h.75m-1.5-1.5h.375c.621 0 1.125.504 1.125 1.125v9.75c0 .621-.504 1.125-1.125 1.125h-.375m1.5-1.5H21a.75.75 0 0 0-.75.75v.75m0 0H3.75m0 0h-.375a1.125 1.125 0 0 1-1.125-1.125V15m1.5 1.5v-.75A.75.75 0 0 0 3 15h-.75M15 10.5a3 3 0 1 1-6 0 3 3 0 0 1 6 0Zm3 0h.008v.008H18V10.5Zm-12 0h.008v.008H6V10.5Z"/></svg><span style="color:#f9b72a">Tandai Lunas</span></span></div>
<div class="a" style="left:505px;top:639px;width:1215px;height:1px;background:#252527"></div>
<div class="a td" style="left:551px;top:658px">BK057-C01</div>
<div class="a td" style="left:684px;top:658px">26 Dec 2025</div>
<div class="a td" style="left:835px;top:658px;letter-spacing:.85px">09 Jan 2026</div>
<div class="a td" style="left:972px;top:658px;color:#71717a">-</div>
<div class="a td" style="left:1110px;top:658px;letter-spacing:.4px">IDR 8,000.00</div>
<svg class="a" style="left:1232px;top:656px" width="24" height="24" viewBox="0 0 24 24" fill="none" stroke="#e52727" stroke-width="1.7" stroke-linecap="round"><path d="m9.75 9.75 4.5 4.5m0-4.5-4.5 4.5M21 12a9 9 0 1 1-18 0 9 9 0 0 1 18 0Z"/></svg>
<div class="a badge" style="left:1297px;top:659px;width:57px">pending</div>
<div class="a acts" style="right:222px;top:658px"><span class="act"><svg width="15" height="15" viewBox="0 0 20 20" style="margin-right:1px"><path fill="#71717a" d="M10 12.5a2.5 2.5 0 1 0 0-5 2.5 2.5 0 0 0 0 5Z"/><path fill="#71717a" fill-rule="evenodd" d="M.664 10.59a1.651 1.651 0 0 1 0-1.186A10.004 10.004 0 0 1 10 3c4.257 0 7.893 2.66 9.336 6.41.147.381.146.804 0 1.186A10.004 10.004 0 0 1 10 17c-4.257 0-7.893-2.66-9.336-6.41ZM14 10a4 4 0 1 1-8 0 4 4 0 0 1 8 0Z"/></svg><span style="color:#e4e4e7">View</span></span><span class="act"><svg width="16" height="16" viewBox="0 0 24 24" fill="none" stroke="#3ed673" stroke-width="1.5" stroke-linecap="round" stroke-linejoin="round"><path d="M9 12.75 11.25 15 15 9.75M21 12a9 9 0 1 1-18 0 9 9 0 0 1 18 0Z"/></svg><span style="color:#3ed673">Setujui</span></span><span class="act"><svg width="16" height="16" viewBox="0 0 24 24" fill="none" stroke="#f09a9a" stroke-width="1.5" stroke-linecap="round" stroke-linejoin="round"><path d="m9.75 9.75 4.5 4.5m0-4.5-4.5 4.5M21 12a9 9 0 1 1-18 0 9 9 0 0 1 18 0Z"/></svg><span style="color:#f4a0a0">Tolak</span></span><span class="act"><svg width="16" height="16" viewBox="0 0 24 24" fill="none" stroke="#f9b72a" stroke-width="1.5" stroke-linecap="round" stroke-linejoin="round"><path d="M2.25 18.75a60.07 60.07 0 0 1 15.797 2.101c.727.198 1.453-.342 1.453-1.096V18.75M3.75 4.5v.75A.75.75 0 0 1 3 6h-.75m0 0v-.375c0-.621.504-1.125 1.125-1.125H20.25M2.25 6v9m18-10.5v.75c0 .414.336.75.75.75h.75m-1.5-1.5h.375c.621 0 1.125.504 1.125 1.125v9.75c0 .621-.504 1.125-1.125 1.125h-.375m1.5-1.5H21a.75.75 0 0 0-.75.75v.75m0 0H3.75m0 0h-.375a1.125 1.125 0 0 1-1.125-1.125V15m1.5 1.5v-.75A.75.75 0 0 0 3 15h-.75M15 10.5a3 3 0 1 1-6 0 3 3 0 0 1 6 0Zm3 0h.008v.008H18V10.5Zm-12 0h.008v.008H6V10.5Z"/></svg><span style="color:#f9b72a">Tandai Lunas</span></span></div>
<div class="a" style="left:505px;top:696px;width:1215px;height:1px;background:#252527"></div>
<div class="a td" style="left:551px;top:715px">BK028-C01</div>
<div class="a td" style="left:684px;top:715px">26 Dec 2025</div>
<div class="a td" style="left:835px;top:715px;letter-spacing:.85px">02 Jan 2026</div>
<div class="a td" style="left:972px;top:715px;color:#71717a">-</div>
<div class="a td" style="left:1110px;top:715px;letter-spacing:.4px">IDR 3,500.00</div>
<svg class="a" style="left:1232px;top:713px" width="24" height="24" viewBox="0 0 24 24" fill="none" stroke="#e52727" stroke-width="1.7" stroke-linecap="round"><path d="m9.75 9.75 4.5 4.5m0-4.5-4.5 4.5M21 12a9 9 0 1 1-18 0 9 9 0 0 1 18 0Z"/></svg>
<div class="a badge info" style="left:1297px;top:716px;width:37px">Aktif</div>
<div class="a acts" style="right:222px;top:715px"><span class="act"><svg width="15" height="15" viewBox="0 0 20 20" style="margin-right:1px"><path fill="#71717a" d="M10 12.5a2.5 2.5 0 1 0 0-5 2.5 2.5 0 0 0 0 5Z"/><path fill="#71717a" fill-rule="evenodd" d="M.664 10.59a1.651 1.651 0 0 1 0-1.186A10.004 10.004 0 0 1 10 3c4.257 0 7.893 2.66 9.336 6.41.147.381.146.804 0 1.186A10.004 10.004 0 0 1 10 17c-4.257 0-7.893-2.66-9.336-6.41ZM14 10a4 4 0 1 1-8 0 4 4 0 0 1 8 0Z"/></svg><span style="color:#e4e4e7">View</span></span><span class="act"><svg width="16" height="16" viewBox="0 0 24 24" fill="none" stroke="#3ed673" stroke-width="1.5" stroke-linecap="round" stroke-linejoin="round"><path d="M9 15 3 9m0 0 6-6M3 9h12a6 6 0 0 1 0 12h-3"/></svg><span style="color:#3ed673">Kembalikan</span></span><span class="act"><svg width="16" height="16" viewBox="0 0 24 24" fill="none" stroke="#f9b72a" stroke-width="1.5" stroke-linecap="round" stroke-linejoin="round"><path d="M2.25 18.75a60.07 60.07 0 0 1 15.797 2.101c.727.198 1.453-.342 1.453-1.096V18.75M3.75 4.5v.75A.75.75 0 0 1 3 6h-.75m0 0v-.375c0-.621.504-1.125 1.125-1.125H20.25M2.25 6v9m18-10.5v.75c0 .414.336.75.75.75h.75m-1.5-1.5h.375c.621 0 1.125.504 1.125 1.125v9.75c0 .621-.504 1.125-1.125 1.125h-.375m1.5-1.5H21a.75.75 0 0 0-.75.75v.75m0 0H3.75m0 0h-.375a1.125 1.125 0 0 1-1.125-1.125V15m1.5 1.5v-.75A.75.75 0 0 0 3 15h-.75M15 10.5a3 3 0 1 1-6 0 3 3 0 0 1 6 0Zm3 0h.008v.008H18V10.5Zm-12 0h.008v.008H6V10.5Z"/></svg><span style="color:#f9b72a">Tandai Lunas</span></span></div>
<div class="a" style="left:505px;top:753px;width:1215px;height:1px;background:#252527"></div>
<div class="a td" style="left:551px;top:772px">BK016-C01</div>
<div class="a td" style="left:684px;top:772px">26 Dec 2025</div>
<div class="a td" style="left:835px;top:772px;letter-spacing:.85px">02 Jan 2026</div>
<div class="a td" style="left:972px;top:772px;color:#71717a">-</div>
<div class="a td" style="left:1110px;top:772px;letter-spacing:.4px">IDR 3,000.00</div>
<svg class="a" style="left:1232px;top:770px" width="24" height="24" viewBox="0 0 24 24" fill="none" stroke="#e52727" stroke-width="1.7" stroke-linecap="round"><path d="m9.75 9.75 4.5 4.5m0-4.5-4.5 4.5M21 12a9 9 0 1 1-18 0 9 9 0 0 1 18 0Z"/></svg>
<div class="a badge info" style="left:1297px;top:773px;width:37px">Aktif</div>
<div class="a acts" style="right:222px;top:772px"><span class="act"><svg width="15" height="15" viewBox="0 0 20 20" style="margin-right:1px"><path fill="#71717a" d="M10 12.5a2.5 2.5 0 1 0 0-5 2.5 2.5 0 0 0 0 5Z"/><path fill="#71717a" fill-rule="evenodd" d="M.664 10.59a1.651 1.651 0 0 1 0-1.186A10.004 10.004 0 0 1 10 3c4.257 0 7.893 2.66 9.336 6.41.147.381.146.804 0 1.186A10.004 10.004 0 0 1 10 17c-4.257 0-7.893-2.66-9.336-6.41ZM14 10a4 4 0 1 1-8 0 4 4 0 0 1 8 0Z"/></svg><span style="color:#e4e4e7">View</span></span><span class="act"><svg width="16" height="16" viewBox="0 0 24 24" fill="none" stroke="#3ed673" stroke-width="1.5" stroke-linecap="round" stroke-linejoin="round"><path d="M9 15 3 9m0 0 6-6M3 9h12a6 6 0 0 1 0 12h-3"/></svg><span style="color:#3ed673">Kembalikan</span></span><span class="act"><svg width="16" height="16" viewBox="0 0 24 24" fill="none" stroke="#f9b72a" stroke-width="1.5" stroke-linecap="round" stroke-linejoin="round"><path d="M2.25 18.75a60.07 60.07 0 0 1 15.797 2.101c.727.198 1.453-.342 1.453-1.096V18.75M3.75 4.5v.75A.75.75 0 0 1 3 6h-.75m0 0v-.375c0-.621.504-1.125 1.125-1.125H20.25M2.25 6v9m18-10.5v.75c0 .414.336.75.75.75h.75m-1.5-1.5h.375c.621 0 1.125.504 1.125 1.125v9.75c0 .621-.504 1.125-1.125 1.125h-.375m1.5-1.5H21a.75.75 0 0 0-.75.75v.75m0 0H3.75m0 0h-.375a1.125 1.125 0 0 1-1.125-1.125V15m1.5 1.5v-.75A.75.75 0 0 0 3 15h-.75M15 10.5a3 3 0 1 1-6 0 3 3 0 0 1 6 0Zm3 0h.008v.008H18V10.5Zm-12 0h.008v.008H6V10.5Z"/></svg><span style="color:#f9b72a">Tandai Lunas</span></span></div>
<div class="a" style="left:505px;top:810px;width:1215px;height:1px;background:#252527"></div>
<div class="a td" style="left:551px;top:829px">BK056-C01</div>
<div class="a td" style="left:684px;top:829px">25 Dec 2025</div>
<div class="a td" style="left:835px;top:829px;letter-spacing:.85px">08 Jan 2026</div>
<div class="a td" style="left:972px;top:829px;color:#71717a">-</div>
<div class="a td" style="left:1110px;top:829px;letter-spacing:.4px">IDR 8,000.00</div>
<svg class="a" style="left:1232px;top:827px" width="24" height="24" viewBox="0 0 24 24" fill="none" stroke="#e52727" stroke-width="1.7" stroke-linecap="round"><path d="m9.75 9.75 4.5 4.5m0-4.5-4.5 4.5M21 12a9 9 0 1 1-18 0 9 9 0 0 1 18 0Z"/></svg>
<div class="a badge info" style="left:1297px;top:830px;width:37px">Aktif</div>
<div class="a acts" style="right:222px;top:829px"><span class="act"><svg width="15" height="15" viewBox="0 0 20 20" style="margin-right:1px"><path fill="#71717a" d="M10 12.5a2.5 2.5 0 1 0 0-5 2.5 2.5 0 0 0 0 5Z"/><path fill="#71717a" fill-rule="evenodd" d="M.664 10.59a1.651 1.651 0 0 1 0-1.186A10.004 10.004 0 0 1 10 3c4.257 0 7.893 2.66 9.336 6.41.147.381.146.804 0 1.186A10.004 10.004 0 0 1 10 17c-4.257 0-7.893-2.66-9.336-6.41ZM14 10a4 4 0 1 1-8 0 4 4 0 0 1 8 0Z"/></svg><span style="color:#e4e4e7">View</span></span><span class="act"><svg width="16" height="16" viewBox="0 0 24 24" fill="none" stroke="#3ed673" stroke-width="1.5" stroke-linecap="round" stroke-linejoin="round"><path d="M9 15 3 9m0 0 6-6M3 9h12a6 6 0 0 1 0 12h-3"/></svg><span style="color:#3ed673">Kembalikan</span></span><span class="act"><svg width="16" height="16" viewBox="0 0 24 24" fill="none" stroke="#f9b72a" stroke-width="1.5" stroke-linecap="round" stroke-linejoin="round"><path d="M2.25 18.75a60.07 60.07 0 0 1 15.797 2.101c.727.198 1.453-.342 1.453-1.096V18.75M3.75 4.5v.75A.75.75 0 0 1 3 6h-.75m0 0v-.375c0-.621.504-1.125 1.125-1.125H20.25M2.25 6v9m18-10.5v.75c0 .414.336.75.75.75h.75m-1.5-1.5h.375c.621 0 1.125.504 1.125 1.125v9.75c0 .621-.504 1.125-1.125 1.125h-.375m1.5-1.5H21a.75.75 0 0 0-.75.75v.75m0 0H3.75m0 0h-.375a1.125 1.125 0 0 1-1.125-1.125V15m1.5 1.5v-.75A.75.75 0 0 0 3 15h-.75M15 10.5a3 3 0 1 1-6 0 3 3 0 0 1 6 0Zm3 0h.008v.008H18V10.5Zm-12 0h.008v.008H6V10.5Z"/></svg><span style="color:#f9b72a">Tandai Lunas</span></span></div>
<div class="a" style="left:505px;top:867px;width:1215px;height:1px;background:#252527"></div>
<div class="a td" style="left:551px;top:886px">BK026-C01</div>
<div class="a td" style="left:684px;top:886px">25 Dec 2025</div>
<div class="a td" style="left:835px;top:886px;letter-spacing:.85px">01 Jan 2026</div>
<div class="a td" style="left:972px;top:886px;color:#71717a">-</div>
<div class="a td" style="left:1110px;top:886px;letter-spacing:.4px">IDR 3,000.00</div>
<svg class="a" style="left:1232px;top:884px" width="24" height="24" viewBox="0 0 24 24" fill="none" stroke="#e52727" stroke-width="1.7" stroke-linecap="round"><path d="m9.75 9.75 4.5 4.5m0-4.5-4.5 4.5M21 12a9 9 0 1 1-18 0 9 9 0 0 1 18 0Z"/></svg>
<div class="a badge info" style="left:1297px;top:887px;width:37px">Aktif</div>
<div class="a acts" style="right:222px;top:886px"><span class="act"><svg width="15" height="15" viewBox="0 0 20 20" style="margin-right:1px"><path fill="#71717a" d="M10 12.5a2.5 2.5 0 1 0 0-5 2.5 2.5 0 0 0 0 5Z"/><path fill="#71717a" fill-rule="evenodd" d="M.664 10.59a1.651 1.651 0 0 1 0-1.186A10.004 10.004 0 0 1 10 3c4.257 0 7.893 2.66 9.336 6.41.147.381.146.804 0 1.186A10.004 10.004 0 0 1 10 17c-4.257 0-7.893-2.66-9.336-6.41ZM14 10a4 4 0 1 1-8 0 4 4 0 0 1 8 0Z"/></svg><span style="color:#e4e4e7">View</span></span><span class="act"><svg width="16" height="16" viewBox="0 0 24 24" fill="none" stroke="#3ed673" stroke-width="1.5" stroke-linecap="round" stroke-linejoin="round"><path d="M9 15 3 9m0 0 6-6M3 9h12a6 6 0 0 1 0 12h-3"/></svg><span style="color:#3ed673">Kembalikan</span></span><span class="act"><svg width="16" height="16" viewBox="0 0 24 24" fill="none" stroke="#f9b72a" stroke-width="1.5" stroke-linecap="round" stroke-linejoin="round"><path d="M2.25 18.75a60.07 60.07 0 0 1 15.797 2.101c.727.198 1.453-.342 1.453-1.096V18.75M3.75 4.5v.75A.75.75 0 0 1 3 6h-.75m0 0v-.375c0-.621.504-1.125 1.125-1.125H20.25M2.25 6v9m18-10.5v.75c0 .414.336.75.75.75h.75m-1.5-1.5h.375c.621 0 1.125.504 1.125 1.125v9.75c0 .621-.504 1.125-1.125 1.125h-.375m1.5-1.5H21a.75.75 0 0 0-.75.75v.75m0 0H3.75m0 0h-.375a1.125 1.125 0 0 1-1.125-1.125V15m1.5 1.5v-.75A.75.75 0 0 0 3 15h-.75M15 10.5a3 3 0 1 1-6 0 3 3 0 0 1 6 0Zm3 0h.008v.008H18V10.5Zm-12 0h.008v.008H6V10.5Z"/></svg><span style="color:#f9b72a">Tandai Lunas</span></span></div>
<div class="a" style="left:505px;top:924px;width:1215px;height:16px;background:#2b2b2d"></div>
<svg class="a" style="left:507px;top:926px" width="12" height="12" viewBox="0 0 12 12"><path d="M3 6 9 2v8z" fill="#a3a3a3"/></svg>
<div class="a" style="left:822px;top:927px;width:881px;height:10px;border-radius:5px;background:#a8a8a8"></div>
<svg class="a" style="left:1706px;top:926px" width="12" height="12" viewBox="0 0 12 12"><path d="M9 6 3 2v8z" fill="#a3a3a3"/></svg>
<div class="a" style="left:528px;top:960px;font-size:14px;font-weight:400;line-height:20px;color:#e4e4e7;letter-spacing:.34px;-webkit-text-stroke:.4px #e4e4e7">Showing 1 to 10 of 38 results</div>
<div class="a" style="left:1038px;top:951px;width:149px;height:38px;border-radius:8px;background:#232326;border:1px solid #3d3d41"></div>
<div class="a" style="left:1123px;top:952px;width:1px;height:36px;background:#3d3d41"></div>
<div class="a" style="left:1052px;top:961px;font-size:14px;line-height:18px;color:#a1a1aa;letter-spacing:.15px;-webkit-text-stroke:.3px #a1a1aa">Per page</div>
<div class="a" style="left:1136px;top:961px;font-size:14px;line-height:18px;color:#fff">10</div>
<svg class="a" style="left:1157px;top:960px" width="20" height="20" viewBox="0 0 20 20"><path d="m14 8.5-4 4-4-4" fill="none" stroke="#a1a1aa" stroke-width="1.3" stroke-linecap="round" stroke-linejoin="round"/></svg>
<div class="a" style="left:1507px;top:951px;width:191px;height:38px;border-radius:8px;background:#222225;border:1px solid #3d3d41;overflow:hidden"><div style="position:absolute;left:0;top:0;width:36px;height:36px;background:#2d2d30"></div></div>
<div class="a" style="left:1543px;top:952px;width:1px;height:36px;background:#3d3d41"></div>
<div class="a" style="left:1581px;top:952px;width:1px;height:36px;background:#3d3d41"></div>
<div class="a" style="left:1620px;top:952px;width:1px;height:36px;background:#3d3d41"></div>
<div class="a" style="left:1660px;top:952px;width:1px;height:36px;background:#3d3d41"></div>
<div class="a" style="left:1510px;top:960px;width:30px;text-align:center;font-size:14px;font-weight:700;line-height:20px;color:#f9b72a">1</div>
<div class="a" style="left:1547px;top:960px;width:30px;text-align:center;font-size:14px;font-weight:700;line-height:20px;color:#e4e4e7">2</div>
<div class="a" style="left:1585px;top:960px;width:30px;text-align:center;font-size:14px;font-weight:700;line-height:20px;color:#e4e4e7">3</div>
<div class="a" style="left:1625px;top:960px;width:30px;text-align:center;font-size:14px;font-weight:700;line-height:20px;color:#e4e4e7">4</div>
<svg class="a" style="left:1669px;top:960px" width="20" height="20" viewBox="0 0 20 20"><path d="m8 6 4 4-4 4" fill="none" stroke="#71717a" stroke-width="1.4" stroke-linecap="round" stroke-linejoin="round"/></svg>
<!-- MAIN_END -->
<!-- ============ APP TOPBAR ============ -->
<div id="topbar" class="a"></div>
<div class="a" style="left:28px;top:106px;font-size:21px;font-weight:700;color:#fff;line-height:26px;letter-spacing:-.65px;-webkit-text-stroke:.35px #fff">sukabaca</div>
<div class="a" style="left:1597px;top:100px;width:245px;height:38px;border-radius:8px;background:#232326;border:1px solid #3c3c40"></div>
<svg class="a" style="left:1610px;top:109px" width="20" height="20" viewBox="0 0 20 20"><path fill="#71717a" fill-rule="evenodd" d="M9 3.5a5.5 5.5 0 1 0 0 11 5.5 5.5 0 0 0 0-11ZM2 9a7 7 0 1 1 12.452 4.391l3.328 3.329a.75.75 0 1 1-1.06 1.06l-3.329-3.328A7 7 0 0 1 2 9Z"/></svg>
<div class="a" style="left:1638px;top:110px;font-size:14px;line-height:18px;color:#85858c;letter-spacing:.35px">Search</div>
<div class="a" style="left:1857px;top:103px;width:32px;height:32px;border-radius:16px;background:#000;color:#fff;font-size:14px;line-height:32px;text-align:center">A</div>

<!-- page scrollbar -->
<div class="a" style="left:1905px;top:87px;width:14px;height:945px;background:#141416"></div>
<svg class="a" style="left:1906px;top:89px" width="12" height="10" viewBox="0 0 12 10"><path d="M6 2 10.5 8h-9z" fill="#a3a3a3"/></svg>
<div class="a" style="left:1908px;top:139px;width:9px;height:877px;border-radius:5px;background:#9e9e9e"></div>
<svg class="a" style="left:1906px;top:1019px" width="12" height="10" viewBox="0 0 12 10"><path d="M6 8 10.5 2h-9z" fill="#a3a3a3"/></svg>



<!-- ============ TASKBAR ============ -->
<!-- TASKBAR_START -->
<div class="a" style="left:0;top:1032px;width:1919px;height:47px;background:#1c1c1c;border-top:1px solid #2e2e2e"></div>
<div class="a" style="left:639px;top:1045px;width:23px;height:23px;display:grid;grid-template-columns:11px 11px;grid-gap:1px"><div style="background:linear-gradient(135deg,#6fd3ff,#1aa0f0);border-radius:1px"></div><div style="background:linear-gradient(135deg,#6fd3ff,#1aa0f0);border-radius:1px"></div><div style="background:linear-gradient(135deg,#6fd3ff,#1aa0f0);border-radius:1px"></div><div style="background:linear-gradient(135deg,#6fd3ff,#1aa0f0);border-radius:1px"></div></div>
<div class="a" style="left:675px;top:1040px;width:220px;height:32px;border-radius:16px;background:#383838;border:1px solid #444"></div>
<svg class="a" style="left:685px;top:1047px" width="18" height="18" viewBox="0 0 18 18"><circle cx="7.5" cy="7.5" r="5.6" fill="none" stroke="#e0e0e0" stroke-width="1.6"/><path d="M11.6 11.6 16 16" stroke="#e0e0e0" stroke-width="1.7" stroke-linecap="round"/></svg>
<div class="a" style="left:712px;top:1047px;font-size:14px;line-height:18px;color:#d6d6d6;letter-spacing:-.6px">Search</div>
<svg class="a" style="left:840px;top:1043px" width="52" height="28" viewBox="0 0 52 28"><defs><linearGradient id="sky" x1="0" y1="0" x2="0" y2="1"><stop offset="0" stop-color="#2a2a78"/><stop offset=".45" stop-color="#7a48b0"/><stop offset=".75" stop-color="#e08aa8"/><stop offset="1" stop-color="#f0b080"/></linearGradient></defs><path d="M4 6C8 2 14 3 18 2 24 0 30 1 36 3 42 2 48 4 50 9 52 14 51 20 47 24 40 27 12 27 5 24 1 20 0 11 4 6Z" fill="url(#sky)"/><g stroke="#f4eaff" stroke-width=".7"><path d="M26 2v8M22 6h8M23.2 3.2l5.6 5.6M28.8 3.2l-5.6 5.6"/><path d="M9 7v5M6.5 9.5h5M7.3 7.8l3.4 3.4M10.7 7.8l-3.4 3.4" opacity=".7"/><path d="M43 6v5M40.5 8.5h5M41.3 6.8l3.4 3.4M44.7 6.8l-3.4 3.4" opacity=".7"/></g><path d="M3 23V19h4v-2h2v2h6V12l1.5-4 1.5 4v1h1v-1l1.5-4 1.5 4v7h6V12l1.5-4 1.5 4v1h1v-1l1.5-4 1.5 4v7h4v-2h2v2h4v4z" fill="#3a2418"/><path d="M16 16h18" stroke="#f0c070" stroke-width=".8"/><path d="M16 14h4M30 14h4" stroke="#ffd890" stroke-width=".6"/><path d="M4 22h44v2c-4 3-36 3-44 0z" fill="#2a3a5a"/><path d="M10 23.5h6M22 23.5h8M34 23.5h6" stroke="#48d8e8" stroke-width="1.2"/><path d="M8 20h36" stroke="#f0c060" stroke-width=".6" opacity=".8"/></svg>
<div class="a" style="left:907px;top:1051px;width:18px;height:16px;border-radius:2px;background:#7a7a7a"></div>
<div class="a" style="left:913px;top:1045px;width:18px;height:16px;border-radius:2px;background:#f0f0f0"></div>
<div class="a" style="left:913px;top:1051px;width:12px;height:10px;background:#bdbdbd"></div>
<svg class="a" style="left:950px;top:1044px" width="25" height="24" viewBox="0 0 25 24"><defs><linearGradient id="eg1" x1="0" y1=".8" x2="1" y2=".3"><stop offset="0" stop-color="#1a8ae8"/><stop offset=".45" stop-color="#28b8e0"/><stop offset=".8" stop-color="#48d890"/><stop offset="1" stop-color="#6ee05a"/></linearGradient></defs><circle cx="12.5" cy="12" r="11.6" fill="url(#eg1)"/><path d="M1.2 10.5C3 7.5 6.5 6 9.5 6.5c3.5.6 5.5 3.2 4.5 6.8C13 17 16 19.5 19.5 19.5c1.3 0 2.5-.3 3.4-.9C21 21.8 17 23.8 12.5 23.8 6 23.8 1 18.5 1 12c0-.5 0-1 .2-1.5z" fill="#1466c8"/><ellipse cx="13" cy="13.2" rx="3.4" ry="3.3" fill="#0c1a30"/><path d="M9.8 15c.8 3.5 4.5 5.5 8.2 5.2 1.8-.1 3.4-.8 4.6-1.8-.7 1.2-2.2 2.6-4 3.2-3.8 1.4-9.5-.8-8.8-6.6z" fill="#0a3f90"/></svg>
<svg class="a" style="left:995px;top:1044px" width="24" height="24" viewBox="0 0 24 24"><defs><linearGradient id="cpa" x1="0" y1="0" x2=".3" y2="1"><stop offset="0" stop-color="#2ab0f8"/><stop offset=".5" stop-color="#30b890"/><stop offset="1" stop-color="#f0d010"/></linearGradient><linearGradient id="cpb" x1=".3" y1="0" x2="0" y2="1"><stop offset="0" stop-color="#a850e0"/><stop offset=".5" stop-color="#f058a0"/><stop offset="1" stop-color="#ffb070"/></linearGradient></defs><path d="M4.5 2.2h10.2c.9 0 1.6.5 1.9 1.3L18 7h-5.4l-2.8 9.8H3.2c-1.3 0-2.2-1.2-1.8-2.4z" fill="url(#cpa)"/><path d="M13 2.2h1.7c.9 0 1.6.5 1.9 1.3L18 7h-5.4z" fill="#1f48c8"/><path d="M14.2 7h6.6c1.3 0 2.2 1.2 1.8 2.4l-3.2 10.8c-.3 1-1.2 1.6-2.2 1.6H9.3c-.9 0-1.6-.5-1.9-1.3L6.2 17h5.2z" fill="url(#cpb)"/><path d="M7.4 20.5 6.2 17h5.2l-1.4 4.8H9.3c-.9 0-1.6-.5-1.9-1.3z" fill="#f05a38"/></svg>
<div class="a" style="left:1039px;top:1045px;width:10px;height:5px;border-radius:2px 2px 0 0;background:#e0a820"></div>
<div class="a" style="left:1039px;top:1048px;width:24px;height:19px;border-radius:2px;background:#f7c948"></div>
<div class="a" style="left:1044px;top:1060px;width:14px;height:7px;border-radius:2px 2px 0 0;background:#1a78d0"></div>
<div class="a" style="left:1088px;top:1045px;width:12px;height:7px;border:2px solid #3aa0e0;border-bottom:none;border-radius:3px 3px 0 0"></div>
<div class="a" style="left:1083px;top:1049px;width:23px;height:19px;border-radius:3px;background:linear-gradient(#fafafa,#e6e6e6)"></div>
<div class="a" style="left:1090px;top:1054px;width:9px;height:9px;display:grid;grid-template-columns:4px 4px;grid-gap:1px"><div style="background:#f25022"></div><div style="background:#7fba00"></div><div style="background:#00a4ef"></div><div style="background:#ffb900"></div></div>
<div class="a" style="left:1127px;top:1044px;width:24px;height:24px;border-radius:50%;background:conic-gradient(from -60deg,#e94235 0 120deg,#fbbc04 120deg 240deg,#34a853 240deg 360deg)"></div><div class="a" style="left:1133.36px;top:1050.36px;width:11.28px;height:11.28px;border-radius:50%;background:#fff"></div><div class="a" style="left:1134.56px;top:1051.56px;width:8.879999999999999px;height:8.879999999999999px;border-radius:50%;background:#1a73e8"></div>
<svg class="a" style="left:1171px;top:1047px" width="21" height="17" viewBox="0 0 21 17"><defs><linearGradient id="ag" x1="0" y1="0" x2="0" y2="1"><stop offset="0" stop-color="#e86a50"/><stop offset=".45" stop-color="#5a8af0"/><stop offset="1" stop-color="#3a6ae0"/></linearGradient></defs><path d="M10.5 0.5C8 0.5 6.5 4 4.5 9 3 12.5 1.5 15 .8 16.5c2.2-1.2 5-4.5 9.7-4.5s7.5 3.3 9.7 4.5C19.5 15 18 12.5 16.5 9 14.5 4 13 .5 10.5.5z" fill="url(#ag)"/></svg>
<div class="a" style="left:1180px;top:1072px;width:6px;height:3px;border-radius:2px;background:#9a9a9a"></div>
<div class="a" style="left:1208px;top:1036px;width:39px;height:40px;border-radius:5px;background:#2a2a2a"></div>
<div class="a" style="left:1215px;top:1044px;width:24px;height:24px;border-radius:50%;background:conic-gradient(from -60deg,#e94235 0 120deg,#fbbc04 120deg 240deg,#34a853 240deg 360deg)"></div><div class="a" style="left:1221.36px;top:1050.36px;width:11.28px;height:11.28px;border-radius:50%;background:#fff"></div><div class="a" style="left:1222.56px;top:1051.56px;width:8.879999999999999px;height:8.879999999999999px;border-radius:50%;background:#1a73e8"></div>
<svg class="a" style="left:1228px;top:1038px" width="16" height="16" viewBox="0 0 20 20"><defs><clipPath id="avc2"><circle cx="10" cy="10" r="10"/></clipPath></defs><g clip-path="url(#avc2)"><rect width="20" height="20" fill="#b8bcc4"/><path d="M0 6C5 2 12 3 20 7V0H0z" fill="#dde2e8"/><ellipse cx="9" cy="9.5" rx="3.6" ry="4.6" fill="#b88070"/><path d="M5.3 8C5.5 4.5 8.5 4 11 4.6 12.5 5 13.1 6.5 12.8 8 11.5 6.5 7.5 6.5 5.3 8z" fill="#2a1c18"/><path d="M0 20v-4c2-3 5-4 8-3.5 3 .5 6 0 9-1.5l3 1V20z" fill="#7a3034"/></g></svg>
<div class="a" style="left:1219px;top:1072px;width:16px;height:3px;border-radius:2px;background:#4cc2ff"></div>
<div class="a" style="left:1259px;top:1044px;width:24px;height:24px;border-radius:50%;background:conic-gradient(from -60deg,#e94235 0 120deg,#fbbc04 120deg 240deg,#34a853 240deg 360deg)"></div><div class="a" style="left:1265.36px;top:1050.36px;width:11.28px;height:11.28px;border-radius:50%;background:#fff"></div><div class="a" style="left:1266.56px;top:1051.56px;width:8.879999999999999px;height:8.879999999999999px;border-radius:50%;background:#1a73e8"></div>
<div class="a" style="left:1268px;top:1072px;width:6px;height:3px;border-radius:2px;background:#9a9a9a"></div>
<svg class="a" style="left:1671px;top:1050px" width="14" height="10" viewBox="0 0 14 10"><path d="M1.5 8 7 2.5 12.5 8" fill="none" stroke="#f0f0f0" stroke-width="1.4"/></svg>
<div class="a" style="left:1706px;top:1048px;width:9px;height:15px;border-radius:5px;background:#3a3a3a"></div>
<svg class="a" style="left:1733px;top:1047px" width="18" height="18" viewBox="0 0 18 18"><path d="M1.5 2.5h11v9h-11zM5 15.5h6M8 11.5v4" fill="none" stroke="#f0f0f0" stroke-width="1.1"/><path d="M13.5 1.5h3v6h-3zM15 7.5v9" fill="#1c1c1c" stroke="#f0f0f0" stroke-width="1.1"/></svg>
<svg class="a" style="left:1757px;top:1047px" width="18" height="18" viewBox="0 0 18 18"><path d="M1.5 6.5h3l4-3.5v12l-4-3.5h-3z" fill="none" stroke="#f0f0f0" stroke-width="1.1" stroke-linejoin="round"/><path d="M11 6.5c.8.8.8 4.2 0 5M13 4.8c1.6 1.6 1.6 6.8 0 8.4" fill="none" stroke="#f0f0f0" stroke-width="1.1"/><path d="M15 3.2c2.2 2.4 2.2 9.2 0 11.6" fill="none" stroke="#777" stroke-width="1.1"/></svg>
<svg class="a" style="left:1781px;top:1047px" width="18" height="18" viewBox="0 0 18 18"><path d="M1 2.5c4 0 8 1 8 6s-3 5.5-5 5.5S1 12 1 8z" fill="none" stroke="#f0f0f0" stroke-width="1.1"/><path d="M9 4c2-1.2 5-1.5 8-1.5v5.5c0 4-2.5 6-5.5 6-1.5 0-3-.7-3.5-1.5M3 16l9-9M5 6l2 2.5v3" fill="none" stroke="#f0f0f0" stroke-width="1.1"/></svg>
<div class="a" style="left:1797px;top:1041px;width:80px;text-align:right;font-size:11.5px;line-height:14px;color:#f0f0f0">18:34</div>
<div class="a" style="left:1797px;top:1057px;width:80px;text-align:right;font-size:12px;line-height:14px;color:#f0f0f0">31/12/2025</div>
<svg class="a" style="left:1884px;top:1047px" width="18" height="18" viewBox="0 0 18 18"><path d="M3 13.5V8.5a5 5 0 0 1 10 0v5l1.5 1.5h-13z" fill="#f0f0f0"/><path d="M7 16h4" stroke="#f0f0f0" stroke-width="1.4"/><text x="8" y="12" font-size="6" font-weight="700" fill="#1c1c1c" text-anchor="middle" font-family="Liberation Sans">z</text><text x="15" y="6" font-size="6" font-weight="700" fill="#f0f0f0" text-anchor="middle" font-family="Liberation Sans">z</text></svg>
<div class="a" style="left:1599px;top:938px;font-size:20px;line-height:24px;color:rgba(255,255,255,.5);letter-spacing:-.1px;white-space:nowrap">Activate Windows</div>
<div class="a" style="left:1600px;top:964px;font-size:14px;line-height:18px;color:rgba(255,255,255,.5);letter-spacing:.37px;white-space:nowrap">Go to Settings to activate Windows.</div>
<!-- TASKBAR_END -->
</body></html>
